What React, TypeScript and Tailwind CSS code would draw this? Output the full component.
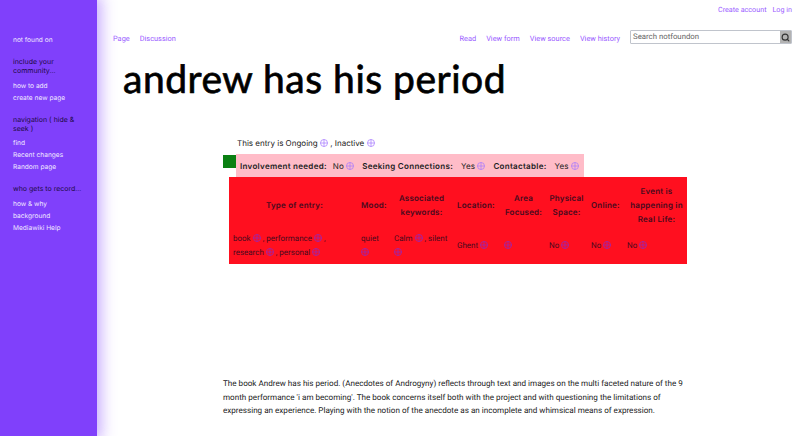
import { Search } from "lucide-react";

function Add({ dark }: { dark?: boolean }) {
  return (
    <svg
      viewBox="0 0 10 10"
      className={`inline-block w-[8px] h-[8px] align-[-1px] ${dark ? "text-[#8a2bc8]" : "text-[#a678ff]"}`}
      fill="none"
      stroke="currentColor"
      strokeWidth="0.9"
    >
      <circle cx="5" cy="5" r="4.4" />
      <path d="M5 0.6V9.4M0.6 5H9.4" />
    </svg>
  );
}

const navGroups = [
  { title: "include your community...", links: ["how to add", "create new page"] },
  { title: "navigation ( hide & seek )", links: ["find", "Recent changes", "Random page"] },
  { title: "who gets to record...", links: ["how & why", "background", "Mediawiki Help"] },
];

function Sidebar() {
  return (
    <div className="w-[97px] shrink-0 bg-[#8040fb] shadow-[0_0_14px_4px_rgba(128,64,251,0.45)] pl-[13px] pr-2 pt-[36px] text-[6.6px] leading-[9px]">
      <div className="text-[#f0e8ff] mb-[12px]">not found on</div>
      {navGroups.map((group) => (
        <div key={group.title} className="mb-[12px]">
          <div className="text-[#1d0a45] text-[7px] mb-[6.5px]">{group.title}</div>
          <div className="flex flex-col gap-[3px] text-[#f0e8ff]">
            {group.links.map((link) => (
              <div key={link}>{link}</div>
            ))}
          </div>
        </div>
      ))}
    </div>
  );
}

function TopBar() {
  return (
    <div className="font-['Roboto',sans-serif] text-[#9a5cff]">
      <div className="flex justify-end gap-[6px] pt-[5px] pr-[8px] text-[7.2px] leading-[10px]">
        <span>Create account</span>
        <span>Log in</span>
      </div>
      <div className="flex items-start justify-between pl-[16px] pr-[8px] pt-[15px] text-[7.4px] leading-[10px]">
        <div className="flex gap-[10px] pt-[4px]">
          <span>Page</span>
          <span>Discussion</span>
        </div>
        <div className="flex gap-[10px]">
          <div className="flex gap-[10px] pt-[4px]">
            <span>Read</span>
            <span>View form</span>
            <span>View source</span>
            <span>View history</span>
          </div>
          <div className="flex w-[162px] h-[14px] border border-[#c0c4cc] rounded-[1px] bg-white">
            <div className="flex-1 pl-[2px] text-[7.8px] leading-[12px] text-[#666]">Search notfoundon</div>
            <div className="w-[11px] bg-[#b3b3b3] flex items-center justify-center">
              <Search size={9} strokeWidth={3} className="text-[#333]" />
            </div>
          </div>
        </div>
      </div>
    </div>
  );
}

function EntryTable() {
  const heads = [
    { label: "Type of entry:", w: "w-[131px]", cls: "text-center" },
    { label: "Mood:", w: "w-[33px]", cls: "text-left" },
    { label: "Associated keywords:", w: "w-[63px]", cls: "text-center pr-[7px]" },
    { label: "Location:", w: "w-[47px]", cls: "text-left" },
    { label: "Area Focused:", w: "w-[45px]", cls: "text-center pr-[5px]" },
    { label: "Physical Space:", w: "w-[42px]", cls: "text-center pr-[6px]" },
    { label: "Online:", w: "w-[36px]", cls: "text-left" },
    { label: "Event is happening in Real Life:", w: "w-[61px]", cls: "text-center" },
  ];
  return (
    <table className="ml-[132px] w-[458px] table-fixed bg-[#ff0f1f] text-[#4a0a1e] text-[8px] leading-[14px] border-collapse">
      <thead>
        <tr>
          {heads.map((h) => (
            <th
              key={h.label}
              className={`${h.w} ${h.cls} h-[55px] px-[1px] font-semibold tracking-[0.2px] align-middle`}
            >
              {h.label}
            </th>
          ))}
        </tr>
      </thead>
      <tbody className="font-['Roboto',sans-serif] text-[8px]">
        <tr className="align-middle">
          <td className="pl-[4px] pr-[6px] pb-[4px]">
            book <Add dark /> , performance <Add dark /> , research <Add dark /> , personal <Add dark />
          </td>
          <td className="px-[1px] pb-[4px]">
            <div>quiet</div>
            <Add dark />
          </td>
          <td className="px-[1px] pb-[4px]">
            <div>
              Calm <Add dark /> , silent
            </div>
            <Add dark />
          </td>
          <td className="px-[1px] pb-[4px]">
            Ghent <Add dark />
          </td>
          <td className="px-[1px] pb-[4px]">
            <Add dark />
          </td>
          <td className="px-[1px] pb-[4px]">
            No <Add dark />
          </td>
          <td className="px-[1px] pb-[4px]">
            No <Add dark />
          </td>
          <td className="px-[1px] pb-[4px]">
            No <Add dark />
          </td>
        </tr>
      </tbody>
    </table>
  );
}

export default function App() {
  return (
    <div className="flex h-[436px] w-[800px] overflow-hidden bg-white text-black font-['Inter','Liberation_Sans',sans-serif] [text-rendering:geometricPrecision]">
      <Sidebar />
      <div className="flex-1 min-w-0">
        <TopBar />
        <h1 className="pl-[26px] pt-[9px] h-[86px] text-[39px] leading-[52px] font-normal tracking-[0.5px] [-webkit-text-stroke:0.7px_black] font-['Lato','Liberation_Sans',sans-serif]">
          andrew has his period
        </h1>
        <div className="pl-[140px] pt-[7px] h-[17px] text-[8px] leading-[12px] text-[#222]">
          This entry is Ongoing <Add /> , Inactive <Add />
        </div>
        <div className="flex items-start pl-[126px] pt-[7px]">
          <div className="w-[13px] h-[13px] bg-[#0a8012] mt-[1px]" />
          <div className="h-[23px] w-[348px] bg-[#ffbcc8] flex items-center gap-[6px] pl-[4px] text-[8px] text-[#222] tracking-[0.1px]">
            <b className="font-semibold tracking-[0.3px]">Involvement needed:</b>
            <span>
              No <Add />
            </span>
            <b className="font-semibold tracking-[0.3px] ml-[2px]">Seeking Connections:</b>
            <span className="ml-[2px]">
              Yes <Add />
            </span>
            <b className="font-semibold tracking-[0.3px] ml-[2px]">Contactable:</b>
            <span className="ml-[2px]">
              Yes <Add />
            </span>
          </div>
        </div>
        <EntryTable />
        <div className="pl-[126px] pt-[113px] text-[8.1px] leading-[13.5px] text-[#222] font-['Roboto',sans-serif] w-[592px]">
          <p>
            The book Andrew has his period. (Anecdotes of Androgyny) reflects through text and images on the multi faceted nature of the 9 month performance 'i am becoming'. The book concerns itself both with the project and with questioning the limitations of expressing an experience. Playing with the notion of the anecdote as an incomplete and whimsical means of expression.
          </p>
        </div>
      </div>
    </div>
  );
}
